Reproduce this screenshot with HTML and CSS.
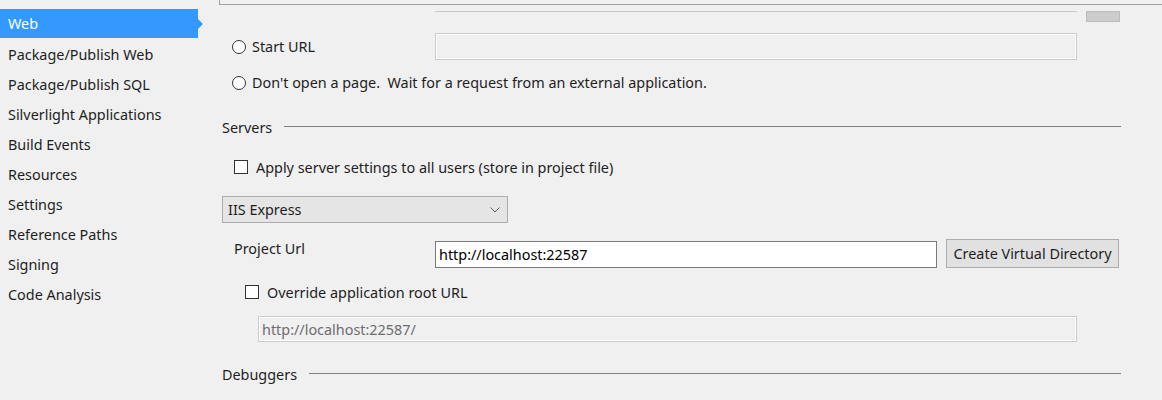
FILE: index.html
```html
<!DOCTYPE html>
<html>
<head>
<meta charset="utf-8">
<link rel="stylesheet" href="styles.css">
</head>
<body>
<div class="app">
  <nav class="sidebar">
    <div class="nav-item selected">Web</div>
    <div class="nav-item">Package/Publish Web</div>
    <div class="nav-item">Package/Publish SQL</div>
    <div class="nav-item">Silverlight Applications</div>
    <div class="nav-item">Build Events</div>
    <div class="nav-item">Resources</div>
    <div class="nav-item">Settings</div>
    <div class="nav-item">Reference Paths</div>
    <div class="nav-item">Signing</div>
    <div class="nav-item">Code Analysis</div>
  </nav>
  <main class="content">
    <div class="topbar"></div>
    <div class="partial-row">
      <div class="partial-line"></div>
      <div class="partial-block"></div>
    </div>
    <div class="row start-url-row">
      <div class="label-col radio-label"><span class="radio"></span><span>Start URL</span></div>
      <div class="textbox disabled-box wide"></div>
    </div>
    <div class="row radio-row">
      <div class="radio-label"><span class="radio"></span><span>Don't open a page.&nbsp; Wait for a request from an external application.</span></div>
    </div>
    <div class="group-heading servers"><span>Servers</span><div class="rule"></div></div>
    <div class="row check-row">
      <span class="checkbox"></span><span>Apply server settings to all users (store in project file)</span>
    </div>
    <div class="dropdown">
      <span>IIS Express</span>
      <svg class="chevron" width="10" height="6" viewBox="0 0 10 6"><polyline points="0.5,0.5 5,5 9.5,0.5" fill="none" stroke="#606060" stroke-width="1"/></svg>
    </div>
    <div class="row project-row">
      <div class="project-label">Project Url</div>
      <div class="textbox url-box">http://localhost:22587</div>
      <div class="button">Create Virtual Directory</div>
    </div>
    <div class="row check-row override-row">
      <span class="checkbox"></span><span>Override application root URL</span>
    </div>
    <div class="textbox disabled-box root-box">http://localhost:22587/</div>
    <div class="group-heading debuggers"><span>Debuggers</span><div class="rule"></div></div>
  </main>
</div>
</body>
</html>
```
FILE: styles.css
```css
html, body {
  margin: 0;
  padding: 0;
  background: #f0f0f0;
}
body {
  width: 1162px;
  height: 400px;
  overflow: hidden;
  font-family: "Noto Sans", "Open Sans", sans-serif;
  font-size: 14.4px;
  color: #1e1e1e;
}
.app {
  display: flex;
  height: 400px;
}
.sidebar {
  width: 219px;
  flex: none;
  padding-top: 9px;
  box-sizing: border-box;
}
.nav-item {
  height: 30px;
  line-height: 30px;
  padding-left: 8px;
  padding-top: 1px;
  width: 198px;
  box-sizing: border-box;
  white-space: nowrap;
}
.nav-item.selected {
  background: #3399ff;
  color: #ffffff;
  height: 29px;
  line-height: 28px;
  margin-bottom: 1px;
  position: relative;
}
.nav-item.selected::after {
  content: "";
  position: absolute;
  right: -5px;
  top: 10px;
  border-left: 5px solid #3399ff;
  border-top: 5px solid transparent;
  border-bottom: 5px solid transparent;
}
.content {
  flex: 1;
  display: flex;
  flex-direction: column;
}
.topbar {
  height: 4px;
  border-left: 1px solid #a0a0a0;
  border-bottom: 1px solid #a0a0a0;
}
.partial-row {
  display: flex;
  margin-top: 6px;
  margin-left: 216px;
  height: 11px;
  gap: 9px;
}
.partial-line {
  width: 642px;
  height: 1px;
  background: #c8c8c8;
}
.partial-block {
  width: 34px;
  height: 11px;
  background: #cccccc;
  border: 1px solid #bcbcbc;
  box-sizing: border-box;
}
.row {
  display: flex;
  align-items: center;
}
.start-url-row {
  margin-top: 11px;
  height: 27px;
}
.label-col {
  width: 216px;
  flex: none;
}
.radio-label {
  display: flex;
  align-items: center;
  padding-left: 13px;
  box-sizing: border-box;
  white-space: nowrap;
}
.radio-label span:last-child {
  margin-top: -1px;
}
.radio {
  width: 14px;
  height: 14px;
  border: 1px solid #333333;
  border-radius: 50%;
  background: #ffffff;
  box-sizing: border-box;
  margin-right: 6px;
  flex: none;
}
.textbox {
  height: 27px;
  box-sizing: border-box;
  display: flex;
  align-items: center;
  padding-left: 3px;
  white-space: nowrap;
}
.disabled-box {
  border: 1px solid #cccccc;
  box-shadow: inset 0 0 0 1px #ffffff;
  background: #f0f0f0;
  color: #6d6d6d;
}
.wide {
  width: 642px;
}
.radio-row {
  margin-top: 13px;
  height: 20px;
}
.group-heading {
  display: flex;
  align-items: center;
  height: 20px;
  padding-left: 3px;
  gap: 12px;
}
.group-heading .rule {
  flex: 1;
  height: 1px;
  background: #808080;
  margin-top: -1px;
  margin-right: 41px;
}
.servers {
  margin-top: 24px;
}
.check-row {
  margin-top: 20px;
  height: 20px;
  padding-left: 15px;
}
.checkbox {
  width: 14px;
  height: 14px;
  border: 1px solid #333333;
  background: #ffffff;
  box-sizing: border-box;
  margin-right: 8px;
  flex: none;
}
.dropdown {
  margin-top: 19px;
  margin-left: 3px;
  width: 286px;
  height: 27px;
  box-sizing: border-box;
  background: #e5e5e5;
  border: 1px solid #acacac;
  display: flex;
  align-items: center;
  justify-content: space-between;
  padding: 0 7px 0 5px;
}
.project-row {
  margin-top: 16px;
  height: 29px;
  align-items: flex-start;
}
.project-label {
  width: 201px;
  flex: none;
  padding-left: 15px;
  line-height: 20px;
}
.url-box {
  margin-top: 2px;
  width: 502px;
  background: #ffffff;
  border: 1px solid #7a7a7a;
  color: #000000;
}
.button {
  margin-left: 9px;
  width: 173px;
  height: 29px;
  box-sizing: border-box;
  background: #e1e1e1;
  border: 1px solid #adadad;
  display: flex;
  align-items: center;
  justify-content: center;
  white-space: nowrap;
}
.override-row {
  margin-top: 14px;
  padding-left: 26px;
}
.root-box {
  margin-top: 14px;
  margin-left: 39px;
  width: 819px;
  height: 26px;
}
.debuggers {
  margin-top: 22px;
}
```
